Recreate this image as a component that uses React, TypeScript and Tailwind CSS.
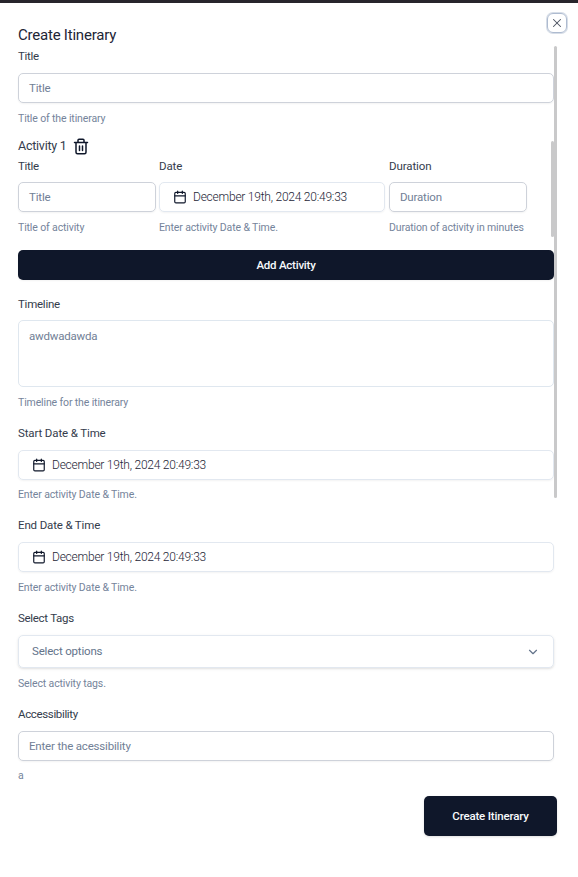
import type { ReactNode } from "react";
import { Calendar, ChevronDown, X } from "lucide-react";

function Label({ children, className = "" }: { children: ReactNode; className?: string }) {
  return <div className={`h-4 whitespace-nowrap text-[11.5px] leading-4 text-[#343c4c] ${className}`}>{children}</div>;
}

function Help({ children, className = "" }: { children: ReactNode; className?: string }) {
  return <div className={`h-4 whitespace-nowrap pt-px text-[10.5px] leading-4 tracking-[-0.13px] text-[#75849b] ${className}`}>{children}</div>;
}

function TextBox({ children, className = "" }: { children: ReactNode; className?: string }) {
  return (
    <div className={`flex h-[30px] items-center rounded-[5px] border border-[#ced2da] px-2.5 text-[11.5px] leading-4 tracking-[-0.18px] text-[#718096] shadow-xs ${className}`}>
      {children}
    </div>
  );
}

function DateBox({ className = "" }: { className?: string }) {
  return (
    <div className={`flex h-[30px] items-center rounded-[5px] border border-[#e2e8f0] px-[13px] text-[12px] font-light text-[#1d2536] shadow-xs ${className}`}>
      <Calendar size={14} strokeWidth={2} className="mr-1.5 shrink-0 text-[#0f172a]" />
      <span className="whitespace-nowrap tracking-[-0.23px]">December 19th, 2024 20:49:33</span>
    </div>
  );
}

function TrashIcon() {
  return (
    <svg width="16" height="17" viewBox="0 0 16 17" fill="none" stroke="currentColor" strokeWidth="1.5" strokeLinecap="round" strokeLinejoin="round" className="ml-1.5 text-[#0f172a]">
      <path d="M1.500 4.500h13M5 4.500V2.250A1 1 0 0 1 6 1.250h4a1 1 0 0 1 1 1v2.250M3 4.500v9.750a1.500 1.500 0 0 0 1.500 1.500h7a1.500 1.500 0 0 0 1.500-1.500V4.500M6.500 8v4.500M9.500 8v4.500" />
    </svg>
  );
}

export default function App() {
  return (
    <div className="relative h-[877px] w-[578px] overflow-hidden border-t-[3px] border-[#27252c] bg-white pl-[18px] pr-6 font-['Roboto','Liberation_Sans',sans-serif]">
      <button className="absolute left-[547px] top-[10px] flex size-5 items-center justify-center rounded-[6px] border border-[#aebbd0] text-[#4b5360] ring-1 ring-[#aebbd0]/50">
        <X size={14} strokeWidth={1.75} className="shrink-0" />
      </button>
      <div className="absolute left-[554px] top-[43px] z-10 h-[452px] w-[3px] rounded-xs bg-[#c9c9ca]" />
      <div className="absolute left-[551px] top-[138px] z-10 h-24 w-[3px] rounded-xs bg-[#c9c9ca]" />

      <h1 className="mt-[22px] h-5 text-[15px] leading-5 tracking-[-0.22px] text-[#1d2536]">Create Itinerary</h1>
      <Label className="mt-[3px] tracking-[-0.3px]">Title</Label>
      <TextBox className="mt-[9px]">Title</TextBox>
      <Help className="mt-[7px]">Title of the itinerary</Help>

      <div className="mt-2.5 flex h-5 items-center text-[12.5px] tracking-[-0.25px] text-[#343c4c]">
        Activity 1
        <TrashIcon />
      </div>
      <div className="mt-0.5 grid grid-cols-[138px_226px_138px] gap-x-[3px]">
        <div>
          <Label className="tracking-[-0.3px]">Title</Label>
          <TextBox className="mt-2">Title</TextBox>
          <Help className="mt-[7px]">Title of activity</Help>
        </div>
        <div>
          <Label className="tracking-[-0.1px]">Date</Label>
          <DateBox className="mt-2" />
          <Help className="mt-[7px]">Enter activity Date &amp; Time.</Help>
        </div>
        <div className="ml-px -mr-px">
          <Label className="tracking-[-0.1px]">Duration</Label>
          <TextBox className="mt-2">Duration</TextBox>
          <Help className="mt-[7px]">Duration of activity in minutes</Help>
        </div>
      </div>
      <button className="mt-[15px] flex h-[30px] w-full items-center justify-center rounded-[5px] bg-[#0f172a] text-[11.5px] font-medium leading-4 tracking-[-0.24px] text-[#f8fafc] shadow-xs">
        Add Activity
      </button>

      <Label className="mt-4 tracking-[-0.25px]">Timeline</Label>
      <div className="mt-2 h-[67px] rounded-[5px] border border-[#dfe7ef] px-2.5 pt-[7px] text-[11.5px] leading-4 tracking-[-0.2px] text-[#718096]">awdwadawda</div>
      <Help className="mt-[7px]">Timeline for the itinerary</Help>

      <Label className="mt-[15px] tracking-[-0.13px]">Start Date &amp; Time</Label>
      <DateBox className="mt-[9px]" />
      <Help className="mt-1.5">Enter activity Date &amp; Time.</Help>

      <Label className="mt-[15px] tracking-[-0.15px]">End Date &amp; Time</Label>
      <DateBox className="mt-[9px]" />
      <Help className="mt-[7px]">Enter activity Date &amp; Time.</Help>

      <Label className="mt-[15px] tracking-[-0.3px]">Select Tags</Label>
      <div className="mt-[9px] flex h-[33px] items-center justify-between rounded-[5px] border border-[#e2e8f0] px-[13px] text-[11.5px] tracking-[-0.18px] text-[#64748b] shadow-sm">
        Select options
        <ChevronDown size={14} strokeWidth={2} />
      </div>
      <Help className="mt-[7px]">Select activity tags.</Help>

      <Label className="mt-[15px] tracking-[-0.35px]">Accessibility</Label>
      <TextBox className="mt-[9px]">Enter the acessibility</TextBox>
      <Help className="mt-1.5">a</Help>

      <button className="ml-[406px] mt-[13px] flex h-10 w-[133px] items-center justify-center rounded-[5px] bg-[#0f172a] text-[11.5px] font-medium leading-4 tracking-[-0.17px] text-[#f8fafc] shadow-sm">
        Create Itinerary
      </button>
    </div>
  );
}
